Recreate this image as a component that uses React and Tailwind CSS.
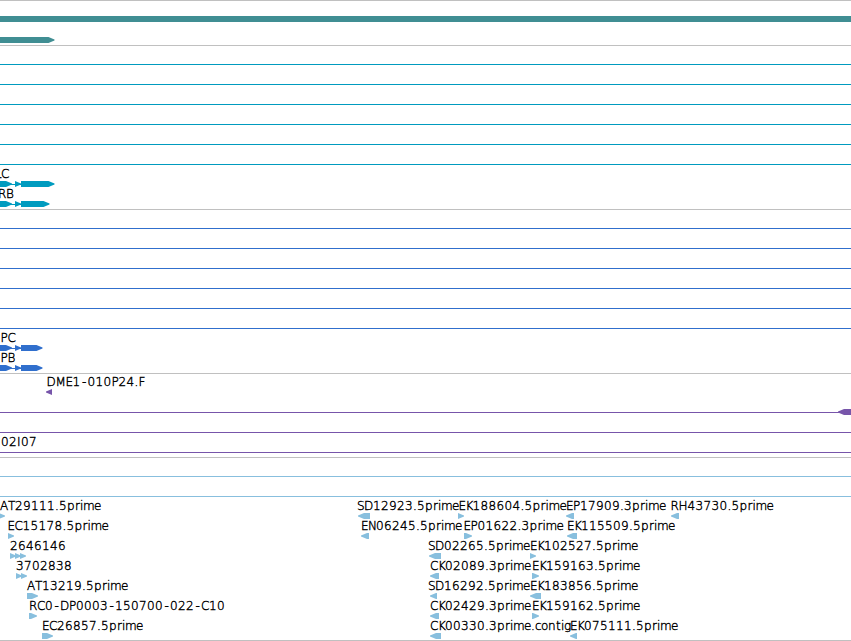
const WIDTH = 851;

const ADVANCES = {
  ".": 4, "-": 7, A: 8, B: 8, C: 8, D: 9, E: 7, F: 7, H: 9, I: 4, K: 7, L: 6,
  M: 10, P: 7, R: 8, S: 7, T: 7,
  p: 8, r: 5, i: 3, m: 11, e: 7, c: 6, o: 7, n: 8, t: 5, g: 8,
};

const GREEN = "#408e93";
const CYAN = "#009bbf";
const BLUE = "#306fcd";
const PURPLE = "#7755aa";
const SKY = "#88bfde";

const spans = (count) => Array.from({ length: count }, () => ({ line: [0, WIDTH] }));

const tracks = [
  {
    id: "gene",
    color: GREEN,
    className: "gap-px pb-0.5",
    rows: [{ boxes: [[0, WIDTH]] }, { arrows: [[-4, 54.5, 1]] }],
  },
  {
    id: "transcript",
    color: CYAN,
    className: "pb-0.5",
    rows: [
      ...spans(6),
      { labels: [[-5, "LC"]], line: [0, 22], arrows: [[-8, 12, 1], [15, 21, 1], [21, 54.5, 1]] },
      { labels: [[-2, "RB"]], line: [0, 22], arrows: [[-8, 12, 1], [15, 21, 1], [21, 49.5, 1]] },
    ],
  },
  {
    id: "cds",
    color: BLUE,
    className: "pb-0.5",
    rows: [
      ...spans(6),
      { labels: [[0.5, "PC"]], line: [0, 22], arrows: [[-8, 12, 1], [15, 21, 1], [21, 42.5, 1]] },
      { labels: [[0.5, "PB"]], line: [0, 22], arrows: [[-8, 12, 1], [15, 21, 1], [21, 42.5, 1]] },
    ],
  },
  {
    id: "bac",
    color: PURPLE,
    className: "pb-0.5",
    rows: [
      { labels: [[46.5, "DME1-010P24.F"]], arrows: [[46, 52, -1]] },
      { line: [0, WIDTH], arrows: [[838, 860, -1]] },
      { line: [0, WIDTH] },
      { labels: [[1, "02I07"]], line: [0, WIDTH] },
    ],
  },
  {
    id: "est",
    color: SKY,
    className: "border-b pb-px",
    rows: [
      ...spans(2),
      {
        labels: [[0, "AT29111.5prime"], [357, "SD12923.5prime"], [458.5, "EK188604.5prime"], [566, "EP17909.3prime"], [670.5, "RH43730.5prime"]],
        arrows: [[-2, 5, 1], [358, 370, -1], [458, 464, 1], [566, 574, -1], [671, 679, -1]],
      },
      {
        labels: [[7.5, "EC15178.5prime"], [361, "EN06245.5prime"], [463.5, "EP01622.3prime"], [567, "EK115509.5prime"]],
        arrows: [[8, 14, 1], [361, 369, -1], [464, 472, 1], [567, 577, -1]],
      },
      {
        labels: [[10, "2646146"], [428, "SD02265.5prime"], [530, "EK102527.5prime"]],
        arrows: [[10, 16, 1], [15, 21, 1], [20, 26, 1], [429, 441, -1], [530, 536, 1]],
      },
      {
        labels: [[16, "3702838"], [430, "CK02089.3prime"], [532, "EK159163.5prime"]],
        arrows: [[16, 22, 1], [21, 27, 1], [430, 439, -1], [532, 539, 1]],
      },
      {
        labels: [[27, "AT13219.5prime"], [428, "SD16292.5prime"], [530, "EK183856.5prime"]],
        arrows: [[27, 38, 1], [430, 437, -1], [530, 541, -1]],
      },
      {
        labels: [[29, "RC0-DP0003-150700-022-C10"], [430, "CK02429.3prime"], [532, "EK159162.5prime"]],
        arrows: [[29, 37, 1], [430, 439, -1], [532, 539, 1]],
      },
      {
        labels: [[42, "EC26857.5prime"], [430, "CK00330.3prime.contig"], [570, "EK075111.5prime"]],
        arrows: [[42, 53, 1], [430, 441, -1], [570, 577, -1]],
      },
    ],
  },
];

function charPositions(start, text) {
  let x = start;
  return [...text].map((ch) => {
    // A hyphen is narrower than its slot, so centre it
    const at = ch === "-" ? x + 1.5 : x;
    x += ADVANCES[ch] ?? 8;
    return at;
  }).join(" ");
}

function arrowPoints([start, end, dir]) {
  // Tip is at most 6px long, the rest is a solid body
  const tip = Math.min(6, end - start);
  if (dir > 0) {
    return `${start},14 ${end - tip},14 ${end},16.5 ${end},17.5 ${end - tip},20 ${start},20`;
  }
  return `${end},14 ${start + tip},14 ${start},16.5 ${start},17.5 ${start + tip},20 ${end},20`;
}

function FeatureRow({ row, color }) {
  const { labels = [], boxes = [], arrows = [], line } = row;
  return (
    <svg width={WIDTH} height="20" className="block shrink-0 overflow-visible" fill={color}>
      {line && <rect x={line[0]} y="17" width={line[1] - line[0]} height="1" />}
      {boxes.map(([start, end]) => (
        <rect key={start} x={start} y="14" width={end - start} height="6" />
      ))}
      {arrows.map((arrow) => (
        <polygon key={arrow[0]} points={arrowPoints(arrow)} />
      ))}
      {labels.map(([x, text]) => (
        <text
          key={text}
          x={charPositions(x, text)}
          y="11"
          className="fill-black stroke-black stroke-[0.4px]"
        >
          {text}
        </text>
      ))}
    </svg>
  );
}

function Track({ track }) {
  return (
    <section className={`flex flex-col border-t border-[#c0c0c0] pt-px ${track.className}`}>
      {track.rows.map((row, i) => (
        <FeatureRow key={i} row={row} color={track.color} />
      ))}
    </section>
  );
}

export default function App() {
  return (
    <main className="h-[641px] w-[851px] overflow-hidden bg-white font-['DejaVu_Sans',sans-serif] text-[12px] font-extralight">
      {tracks.map((track) => (
        <Track key={track.id} track={track} />
      ))}
    </main>
  );
}
